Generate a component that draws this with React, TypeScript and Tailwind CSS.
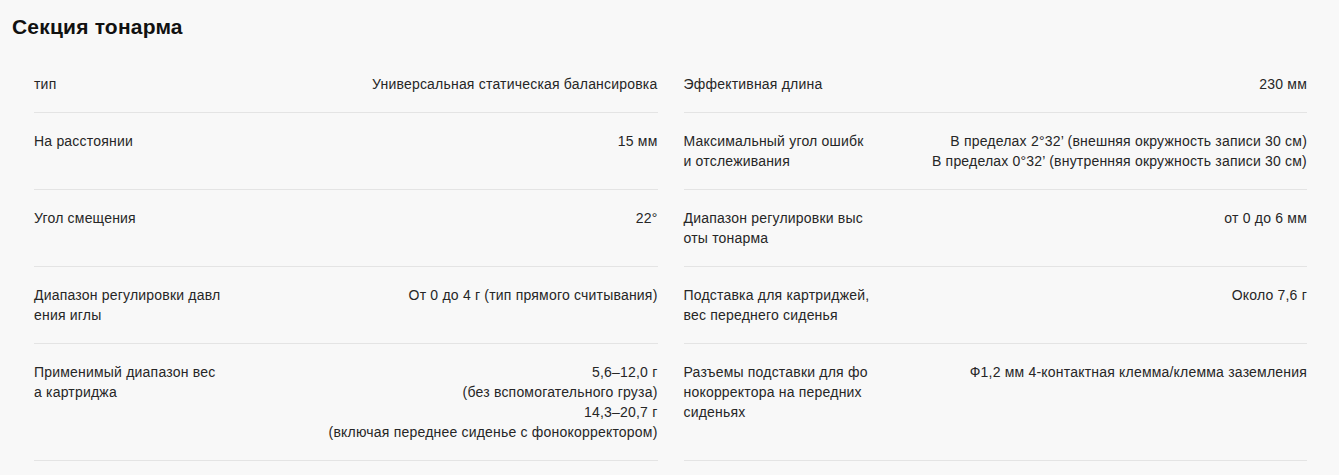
const rows: { label: string; value: string[] }[][] = [
  [
    { label: "тип", value: ["Универсальная статическая балансировка"] },
    { label: "Эффективная длина", value: ["230 мм"] },
  ],
  [
    { label: "На расстоянии", value: ["15 мм"] },
    {
      label: "Максимальный угол ошибки отслеживания",
      value: [
        "В пределах 2°32’ (внешняя окружность записи 30 см)",
        "В пределах 0°32’ (внутренняя окружность записи 30 см)",
      ],
    },
  ],
  [
    { label: "Угол смещения", value: ["22°"] },
    { label: "Диапазон регулировки высоты тонарма", value: ["от 0 до 6 мм"] },
  ],
  [
    { label: "Диапазон регулировки давления иглы", value: ["От 0 до 4 г (тип прямого считывания)"] },
    { label: "Подставка для картриджей, вес переднего сиденья", value: ["Около 7,6 г"] },
  ],
  [
    {
      label: "Применимый диапазон веса картриджа",
      value: [
        "5,6–12,0 г",
        "(без вспомогательного груза)",
        "14,3–20,7 г",
        "(включая переднее сиденье с фонокорректором)",
      ],
    },
    {
      label: "Разъемы подставки для фонокорректора на передних сиденьях",
      value: ["Ф1,2 мм 4-контактная клемма/клемма заземления"],
    },
  ],
];

export default function App() {
  return (
    <div className="min-h-[475px] bg-[#f8f8f8] text-[#262626] font-['Liberation_Sans',Arial,sans-serif]">
      <h2 className="px-3 pt-[13px] text-[21px] leading-7 tracking-[0.2px] font-bold text-[#111]">
        Секция тонарма
      </h2>

      <div className="mt-[15px] pl-[34px] pr-[32px] grid grid-cols-2 gap-x-[26px]">
        {rows.flat().map((cell, i) => (
          <div
            key={i}
            className="flex justify-between gap-4 py-[18px] border-b border-[#e4e4e4] text-sm leading-5 tracking-[0.2px]"
          >
            {/* labels are cut mid-word in the original */}
            <div className="w-[187px] shrink-0 break-all">{cell.label}</div>
            <div className="text-right">
              {cell.value.map((v) => (
                <div key={v}>{v}</div>
              ))}
            </div>
          </div>
        ))}
      </div>
    </div>
  );
}
